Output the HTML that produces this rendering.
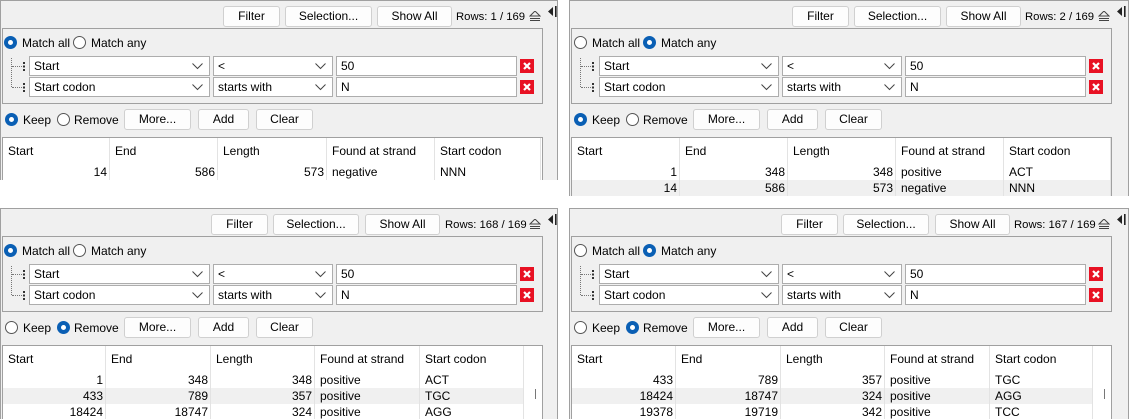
<!DOCTYPE html>
<html><head><meta charset="utf-8"><style>
*{box-sizing:border-box;margin:0;padding:0}
body{width:1129px;height:419px;background:#fff;position:relative;overflow:hidden;font-family:"Liberation Sans",sans-serif;font-size:12px;color:#000}
.p{position:absolute;background:#f0f0f0;border:1px solid #a0a0a0;border-bottom:none;overflow:hidden}
.a{position:absolute;line-height:14px}
.btn{position:absolute;height:21px;background:#fdfdfd;border:1px solid #d0d0d0;border-radius:3px;text-align:center;line-height:19px}
.fb{position:absolute;left:1px;top:27px;width:541px;height:76px;border:1px solid #a0a0a0}
.rad{position:absolute;width:13px;height:13px;border-radius:50%;border:1px solid #555;background:#fff}
.rad.on{border:4px solid #0a5fb4;background:#fff}
.cb{position:absolute;height:20px;background:#fff;border:1px solid #adadad;padding-left:4px;line-height:18px}
.cb svg{position:absolute;right:6px;top:6px}
.x{position:absolute;width:14px;height:14px;background:#e81123}
.tb{position:absolute;left:1px;top:136px;width:541px;height:80px;background:#fff;border:1px solid #a0a0a0;border-bottom:none}
.r{position:absolute;left:0;display:flex;height:16px;line-height:16px}
.r div{border-right:1px solid #e3e3e3;padding:0 2px 0 5px;white-space:nowrap;overflow:hidden}
.r .n{text-align:right;padding-right:2px}
.h{height:26px;line-height:26px}
.g{background:#f0f0f0}
.dot{position:absolute;border-left:1px dotted #777}
.doth{position:absolute;border-top:1px dotted #777;width:10px}
.grip{position:absolute;width:2px;height:9px;background:repeating-linear-gradient(#333 0 2px,transparent 2px 3.5px)}
.rows{font-size:11.3px;white-space:nowrap}
</style></head><body>

<!-- PANEL TL -->
<div class="p" style="left:0;top:0;width:558px;height:180px">
 <div class="btn" style="left:222px;top:5px;width:57px">Filter</div>
 <div class="btn" style="left:284px;top:5px;width:87px">Selection...</div>
 <div class="btn" style="left:376px;top:5px;width:75px">Show All</div>
 <div class="a rows" style="left:455px;top:9px">Rows: 1 / 169</div>
 <svg class="a" style="left:528px;top:10px" width="12" height="10"><path d="M1 5 L6 0 L11 5Z" fill="none" stroke="#444"/><path d="M1 7.5H11M1 9.5H11" stroke="#444"/></svg>
 <svg class="a" style="left:547px;top:5px" width="9" height="11"><path d="M0 5.5 L5 1 L5 10Z" fill="#222"/><rect x="7" y="0" width="1.6" height="11" fill="#222"/></svg>
 <div class="fb"></div>
 <div class="rad on" style="left:3px;top:35px"></div><div class="a" style="left:21px;top:35px">Match all</div>
 <div class="rad" style="left:72px;top:35px"></div><div class="a" style="left:90px;top:35px">Match any</div>
 <div class="dot" style="left:10px;top:57px;height:29px"></div><div class="doth" style="left:11px;top:65px"></div><div class="doth" style="left:11px;top:86px"></div>
 <div class="grip" style="left:22px;top:61px"></div><div class="grip" style="left:22px;top:82px"></div>
 <div class="cb" style="left:28px;top:55px;width:181px">Start<svg width="11" height="7"><path d="M0.5 0.5L5.5 5.5L10.5 0.5" fill="none" stroke="#444"/></svg></div>
 <div class="cb" style="left:212px;top:55px;width:120px">&lt;<svg width="11" height="7"><path d="M0.5 0.5L5.5 5.5L10.5 0.5" fill="none" stroke="#444"/></svg></div>
 <div class="cb" style="left:335px;top:55px;width:181px">50</div>
 <div class="x" style="left:519px;top:58px"><svg width="14" height="14"><path d="M4 4L10 10M10 4L4 10" stroke="#fff" stroke-width="2.2"/></svg></div>
 <div class="cb" style="left:28px;top:76px;width:181px">Start codon<svg width="11" height="7"><path d="M0.5 0.5L5.5 5.5L10.5 0.5" fill="none" stroke="#444"/></svg></div>
 <div class="cb" style="left:212px;top:76px;width:120px">starts with<svg width="11" height="7"><path d="M0.5 0.5L5.5 5.5L10.5 0.5" fill="none" stroke="#444"/></svg></div>
 <div class="cb" style="left:335px;top:76px;width:181px">N</div>
 <div class="x" style="left:519px;top:79px"><svg width="14" height="14"><path d="M4 4L10 10M10 4L4 10" stroke="#fff" stroke-width="2.2"/></svg></div>
 <div class="rad on" style="left:4px;top:112px"></div><div class="a" style="left:22px;top:112px">Keep</div>
 <div class="rad" style="left:56px;top:112px"></div><div class="a" style="left:73px;top:112px">Remove</div>
 <div class="btn" style="left:123px;top:108px;width:67px">More...</div>
 <div class="btn" style="left:197px;top:108px;width:51px">Add</div>
 <div class="btn" style="left:255px;top:108px;width:57px">Clear</div>
 <div class="tb">
  <div class="r h" style="top:0"><div style="width:107px">Start</div><div style="width:108px">End</div><div style="width:109px">Length</div><div style="width:108px">Found at strand</div><div style="width:106px">Start codon</div></div>
  <div class="r" style="top:26px"><div class="n" style="width:107px">14</div><div class="n" style="width:108px">586</div><div class="n" style="width:109px">573</div><div style="width:108px">negative</div><div style="width:106px">NNN</div></div>
 </div>
</div>

<!-- PANEL TR -->
<div class="p" style="left:569px;top:0;width:560px;height:196px">
 <div class="btn" style="left:222px;top:5px;width:57px">Filter</div>
 <div class="btn" style="left:284px;top:5px;width:87px">Selection...</div>
 <div class="btn" style="left:376px;top:5px;width:75px">Show All</div>
 <div class="a rows" style="left:455px;top:9px">Rows: 2 / 169</div>
 <svg class="a" style="left:528px;top:10px" width="12" height="10"><path d="M1 5 L6 0 L11 5Z" fill="none" stroke="#444"/><path d="M1 7.5H11M1 9.5H11" stroke="#444"/></svg>
 <svg class="a" style="left:547px;top:5px" width="9" height="11"><path d="M0 5.5 L5 1 L5 10Z" fill="#222"/><rect x="7" y="0" width="1.6" height="11" fill="#222"/></svg>
 <div class="fb"></div>
 <div class="rad" style="left:4px;top:35px"></div><div class="a" style="left:22px;top:35px">Match all</div>
 <div class="rad on" style="left:73px;top:35px"></div><div class="a" style="left:91px;top:35px">Match any</div>
 <div class="dot" style="left:10px;top:57px;height:29px"></div><div class="doth" style="left:11px;top:65px"></div><div class="doth" style="left:11px;top:86px"></div>
 <div class="grip" style="left:22px;top:61px"></div><div class="grip" style="left:22px;top:82px"></div>
 <div class="cb" style="left:29px;top:55px;width:180px">Start<svg width="11" height="7"><path d="M0.5 0.5L5.5 5.5L10.5 0.5" fill="none" stroke="#444"/></svg></div>
 <div class="cb" style="left:212px;top:55px;width:120px">&lt;<svg width="11" height="7"><path d="M0.5 0.5L5.5 5.5L10.5 0.5" fill="none" stroke="#444"/></svg></div>
 <div class="cb" style="left:335px;top:55px;width:181px">50</div>
 <div class="x" style="left:519px;top:58px"><svg width="14" height="14"><path d="M4 4L10 10M10 4L4 10" stroke="#fff" stroke-width="2.2"/></svg></div>
 <div class="cb" style="left:29px;top:76px;width:180px">Start codon<svg width="11" height="7"><path d="M0.5 0.5L5.5 5.5L10.5 0.5" fill="none" stroke="#444"/></svg></div>
 <div class="cb" style="left:212px;top:76px;width:120px">starts with<svg width="11" height="7"><path d="M0.5 0.5L5.5 5.5L10.5 0.5" fill="none" stroke="#444"/></svg></div>
 <div class="cb" style="left:335px;top:76px;width:181px">N</div>
 <div class="x" style="left:519px;top:79px"><svg width="14" height="14"><path d="M4 4L10 10M10 4L4 10" stroke="#fff" stroke-width="2.2"/></svg></div>
 <div class="rad on" style="left:4px;top:112px"></div><div class="a" style="left:22px;top:112px">Keep</div>
 <div class="rad" style="left:56px;top:112px"></div><div class="a" style="left:73px;top:112px">Remove</div>
 <div class="btn" style="left:123px;top:108px;width:67px">More...</div>
 <div class="btn" style="left:197px;top:108px;width:51px">Add</div>
 <div class="btn" style="left:255px;top:108px;width:57px">Clear</div>
 <div class="tb">
  <div class="r h" style="top:0"><div style="width:108px">Start</div><div style="width:108px">End</div><div style="width:108px">Length</div><div style="width:108px">Found at strand</div><div style="width:107px">Start codon</div></div>
  <div class="r" style="top:26px"><div class="n" style="width:108px">1</div><div class="n" style="width:108px">348</div><div class="n" style="width:108px">348</div><div style="width:108px">positive</div><div style="width:107px">ACT</div></div>
  <div class="r g" style="top:42px"><div class="n" style="width:108px">14</div><div class="n" style="width:108px">586</div><div class="n" style="width:108px">573</div><div style="width:108px">negative</div><div style="width:107px">NNN</div></div>
 </div>
</div>

<!-- PANEL BL -->
<div class="p" style="left:0;top:208px;width:558px;height:211px">
 <div class="btn" style="left:210px;top:5px;width:57px">Filter</div>
 <div class="btn" style="left:272px;top:5px;width:86px">Selection...</div>
 <div class="btn" style="left:364px;top:5px;width:75px">Show All</div>
 <div class="a rows" style="left:444px;top:9px">Rows: 168 / 169</div>
 <svg class="a" style="left:528px;top:10px" width="12" height="10"><path d="M1 5 L6 0 L11 5Z" fill="none" stroke="#444"/><path d="M1 7.5H11M1 9.5H11" stroke="#444"/></svg>
 <svg class="a" style="left:547px;top:5px" width="9" height="11"><path d="M0 5.5 L5 1 L5 10Z" fill="#222"/><rect x="7" y="0" width="1.6" height="11" fill="#222"/></svg>
 <div class="fb"></div>
 <div class="rad on" style="left:3px;top:35px"></div><div class="a" style="left:21px;top:35px">Match all</div>
 <div class="rad" style="left:72px;top:35px"></div><div class="a" style="left:90px;top:35px">Match any</div>
 <div class="dot" style="left:10px;top:57px;height:29px"></div><div class="doth" style="left:11px;top:65px"></div><div class="doth" style="left:11px;top:86px"></div>
 <div class="grip" style="left:22px;top:61px"></div><div class="grip" style="left:22px;top:82px"></div>
 <div class="cb" style="left:28px;top:55px;width:181px">Start<svg width="11" height="7"><path d="M0.5 0.5L5.5 5.5L10.5 0.5" fill="none" stroke="#444"/></svg></div>
 <div class="cb" style="left:212px;top:55px;width:120px">&lt;<svg width="11" height="7"><path d="M0.5 0.5L5.5 5.5L10.5 0.5" fill="none" stroke="#444"/></svg></div>
 <div class="cb" style="left:335px;top:55px;width:181px">50</div>
 <div class="x" style="left:519px;top:58px"><svg width="14" height="14"><path d="M4 4L10 10M10 4L4 10" stroke="#fff" stroke-width="2.2"/></svg></div>
 <div class="cb" style="left:28px;top:76px;width:181px">Start codon<svg width="11" height="7"><path d="M0.5 0.5L5.5 5.5L10.5 0.5" fill="none" stroke="#444"/></svg></div>
 <div class="cb" style="left:212px;top:76px;width:120px">starts with<svg width="11" height="7"><path d="M0.5 0.5L5.5 5.5L10.5 0.5" fill="none" stroke="#444"/></svg></div>
 <div class="cb" style="left:335px;top:76px;width:181px">N</div>
 <div class="x" style="left:519px;top:79px"><svg width="14" height="14"><path d="M4 4L10 10M10 4L4 10" stroke="#fff" stroke-width="2.2"/></svg></div>
 <div class="rad" style="left:4px;top:112px"></div><div class="a" style="left:22px;top:112px">Keep</div>
 <div class="rad on" style="left:56px;top:112px"></div><div class="a" style="left:73px;top:112px">Remove</div>
 <div class="btn" style="left:123px;top:108px;width:67px">More...</div>
 <div class="btn" style="left:197px;top:108px;width:51px">Add</div>
 <div class="btn" style="left:255px;top:108px;width:57px">Clear</div>
 <div class="tb">
  <div class="r h" style="top:0"><div style="width:103px">Start</div><div style="width:105px">End</div><div style="width:104px">Length</div><div style="width:105px">Found at strand</div><div style="width:104px">Start codon</div></div>
  <div class="r" style="top:26px"><div class="n" style="width:103px">1</div><div class="n" style="width:105px">348</div><div class="n" style="width:104px">348</div><div style="width:105px">positive</div><div style="width:104px">ACT</div></div>
  <div class="r g" style="top:42px"><div class="n" style="width:103px">433</div><div class="n" style="width:105px">789</div><div class="n" style="width:104px">357</div><div style="width:105px">positive</div><div style="width:104px">TGC</div></div>
  <div class="r" style="top:58px"><div class="n" style="width:103px">18424</div><div class="n" style="width:105px">18747</div><div class="n" style="width:104px">324</div><div style="width:105px">positive</div><div style="width:104px">AGG</div></div>
  <div class="a" style="left:532px;top:43px;width:1px;height:10px;background:#777"></div>
 </div>
</div>

<!-- PANEL BR -->
<div class="p" style="left:569px;top:208px;width:560px;height:211px">
 <div class="btn" style="left:211px;top:5px;width:57px">Filter</div>
 <div class="btn" style="left:273px;top:5px;width:86px">Selection...</div>
 <div class="btn" style="left:365px;top:5px;width:75px">Show All</div>
 <div class="a rows" style="left:444px;top:9px">Rows: 167 / 169</div>
 <svg class="a" style="left:528px;top:10px" width="12" height="10"><path d="M1 5 L6 0 L11 5Z" fill="none" stroke="#444"/><path d="M1 7.5H11M1 9.5H11" stroke="#444"/></svg>
 <svg class="a" style="left:547px;top:5px" width="9" height="11"><path d="M0 5.5 L5 1 L5 10Z" fill="#222"/><rect x="7" y="0" width="1.6" height="11" fill="#222"/></svg>
 <div class="fb"></div>
 <div class="rad" style="left:4px;top:35px"></div><div class="a" style="left:22px;top:35px">Match all</div>
 <div class="rad on" style="left:73px;top:35px"></div><div class="a" style="left:91px;top:35px">Match any</div>
 <div class="dot" style="left:10px;top:57px;height:29px"></div><div class="doth" style="left:11px;top:65px"></div><div class="doth" style="left:11px;top:86px"></div>
 <div class="grip" style="left:22px;top:61px"></div><div class="grip" style="left:22px;top:82px"></div>
 <div class="cb" style="left:29px;top:55px;width:180px">Start<svg width="11" height="7"><path d="M0.5 0.5L5.5 5.5L10.5 0.5" fill="none" stroke="#444"/></svg></div>
 <div class="cb" style="left:212px;top:55px;width:120px">&lt;<svg width="11" height="7"><path d="M0.5 0.5L5.5 5.5L10.5 0.5" fill="none" stroke="#444"/></svg></div>
 <div class="cb" style="left:335px;top:55px;width:181px">50</div>
 <div class="x" style="left:519px;top:58px"><svg width="14" height="14"><path d="M4 4L10 10M10 4L4 10" stroke="#fff" stroke-width="2.2"/></svg></div>
 <div class="cb" style="left:29px;top:76px;width:180px">Start codon<svg width="11" height="7"><path d="M0.5 0.5L5.5 5.5L10.5 0.5" fill="none" stroke="#444"/></svg></div>
 <div class="cb" style="left:212px;top:76px;width:120px">starts with<svg width="11" height="7"><path d="M0.5 0.5L5.5 5.5L10.5 0.5" fill="none" stroke="#444"/></svg></div>
 <div class="cb" style="left:335px;top:76px;width:181px">N</div>
 <div class="x" style="left:519px;top:79px"><svg width="14" height="14"><path d="M4 4L10 10M10 4L4 10" stroke="#fff" stroke-width="2.2"/></svg></div>
 <div class="rad" style="left:4px;top:112px"></div><div class="a" style="left:22px;top:112px">Keep</div>
 <div class="rad on" style="left:56px;top:112px"></div><div class="a" style="left:73px;top:112px">Remove</div>
 <div class="btn" style="left:123px;top:108px;width:67px">More...</div>
 <div class="btn" style="left:197px;top:108px;width:51px">Add</div>
 <div class="btn" style="left:255px;top:108px;width:57px">Clear</div>
 <div class="tb">
  <div class="r h" style="top:0"><div style="width:104px">Start</div><div style="width:105px">End</div><div style="width:104px">Length</div><div style="width:105px">Found at strand</div><div style="width:103px">Start codon</div></div>
  <div class="r" style="top:26px"><div class="n" style="width:104px">433</div><div class="n" style="width:105px">789</div><div class="n" style="width:104px">357</div><div style="width:105px">positive</div><div style="width:103px">TGC</div></div>
  <div class="r g" style="top:42px"><div class="n" style="width:104px">18424</div><div class="n" style="width:105px">18747</div><div class="n" style="width:104px">324</div><div style="width:105px">positive</div><div style="width:103px">AGG</div></div>
  <div class="r" style="top:58px"><div class="n" style="width:104px">19378</div><div class="n" style="width:105px">19719</div><div class="n" style="width:104px">342</div><div style="width:105px">positive</div><div style="width:103px">TCC</div></div>
  <div class="a" style="left:532px;top:43px;width:1px;height:10px;background:#777"></div>
 </div>
</div>

</body></html>
